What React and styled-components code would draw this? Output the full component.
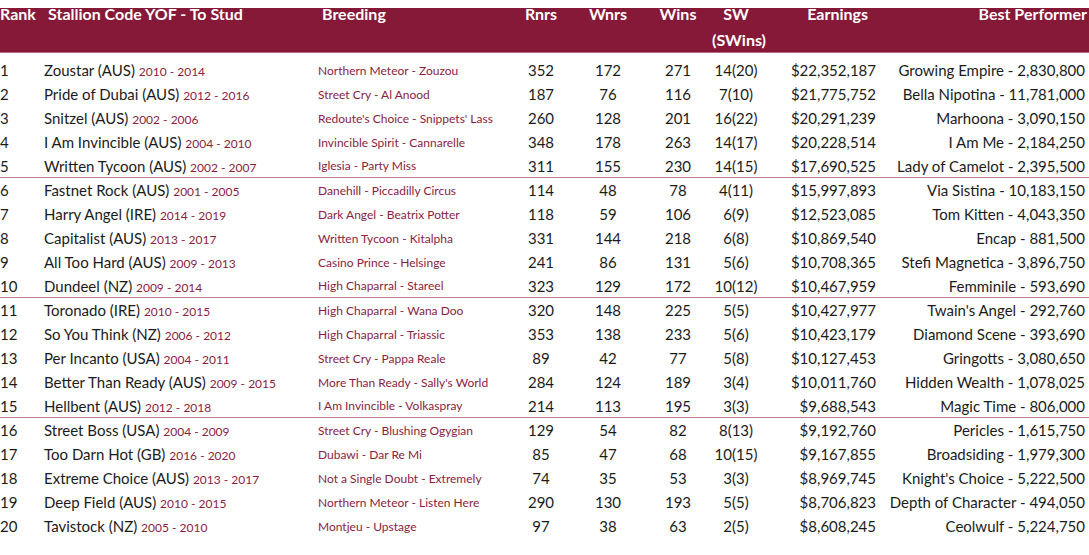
import React from "react";
import styled, { createGlobalStyle } from "styled-components";

const GlobalStyle = createGlobalStyle`
  body {
    margin: 0;
    background: #fff;
    font-family: Lato, "Liberation Sans", sans-serif;
  }
`;

const rows = [
  ["1", "Zoustar (AUS)", "2010 - 2014", "Northern Meteor - Zouzou", "352", "172", "271", "14(20)", "$22,352,187", "Growing Empire - 2,830,800"],
  ["2", "Pride of Dubai (AUS)", "2012 - 2016", "Street Cry - Al Anood", "187", "76", "116", "7(10)", "$21,775,752", "Bella Nipotina - 11,781,000"],
  ["3", "Snitzel (AUS)", "2002 - 2006", "Redoute's Choice - Snippets' Lass", "260", "128", "201", "16(22)", "$20,291,239", "Marhoona - 3,090,150"],
  ["4", "I Am Invincible (AUS)", "2004 - 2010", "Invincible Spirit - Cannarelle", "348", "178", "263", "14(17)", "$20,228,514", "I Am Me - 2,184,250"],
  ["5", "Written Tycoon (AUS)", "2002 - 2007", "Iglesia - Party Miss", "311", "155", "230", "14(15)", "$17,690,525", "Lady of Camelot - 2,395,500"],
  ["6", "Fastnet Rock (AUS)", "2001 - 2005", "Danehill - Piccadilly Circus", "114", "48", "78", "4(11)", "$15,997,893", "Via Sistina - 10,183,150"],
  ["7", "Harry Angel (IRE)", "2014 - 2019", "Dark Angel - Beatrix Potter", "118", "59", "106", "6(9)", "$12,523,085", "Tom Kitten - 4,043,350"],
  ["8", "Capitalist (AUS)", "2013 - 2017", "Written Tycoon - Kitalpha", "331", "144", "218", "6(8)", "$10,869,540", "Encap - 881,500"],
  ["9", "All Too Hard (AUS)", "2009 - 2013", "Casino Prince - Helsinge", "241", "86", "131", "5(6)", "$10,708,365", "Stefi Magnetica - 3,896,750"],
  ["10", "Dundeel (NZ)", "2009 - 2014", "High Chaparral - Stareel", "323", "129", "172", "10(12)", "$10,467,959", "Femminile - 593,690"],
  ["11", "Toronado (IRE)", "2010 - 2015", "High Chaparral - Wana Doo", "320", "148", "225", "5(5)", "$10,427,977", "Twain's Angel - 292,760"],
  ["12", "So You Think (NZ)", "2006 - 2012", "High Chaparral - Triassic", "353", "138", "233", "5(6)", "$10,423,179", "Diamond Scene - 393,690"],
  ["13", "Per Incanto (USA)", "2004 - 2011", "Street Cry - Pappa Reale", "89", "42", "77", "5(8)", "$10,127,453", "Gringotts - 3,080,650"],
  ["14", "Better Than Ready (AUS)", "2009 - 2015", "More Than Ready - Sally's World", "284", "124", "189", "3(4)", "$10,011,760", "Hidden Wealth - 1,078,025"],
  ["15", "Hellbent (AUS)", "2012 - 2018", "I Am Invincible - Volkaspray", "214", "113", "195", "3(3)", "$9,688,543", "Magic Time - 806,000"],
  ["16", "Street Boss (USA)", "2004 - 2009", "Street Cry - Blushing Ogygian", "129", "54", "82", "8(13)", "$9,192,760", "Pericles - 1,615,750"],
  ["17", "Too Darn Hot (GB)", "2016 - 2020", "Dubawi - Dar Re Mi", "85", "47", "68", "10(15)", "$9,167,855", "Broadsiding - 1,979,300"],
  ["18", "Extreme Choice (AUS)", "2013 - 2017", "Not a Single Doubt - Extremely", "74", "35", "53", "3(3)", "$8,969,745", "Knight's Choice - 5,222,500"],
  ["19", "Deep Field (AUS)", "2010 - 2015", "Northern Meteor - Listen Here", "290", "130", "193", "5(5)", "$8,706,823", "Depth of Character - 494,050"],
  ["20", "Tavistock (NZ)", "2005 - 2010", "Montjeu - Upstage", "97", "38", "63", "2(5)", "$8,608,245", "Ceolwulf - 5,224,750"],
];

// column template shared by header and rows
const COLS = "44px 274px 192px 62px 72px 68px 48px 116px 1fr";

const Table = styled.div`
  width: 1089px;
  padding-top: 8px;
`;

const Head = styled.div`
  display: grid;
  grid-template-columns: ${COLS};
  height: 45px;
  background: #861838;
  border-bottom: 1px solid #b76a82;
  box-sizing: border-box;
`;

const HeadCell = styled.div`
  color: #fff;
  font-weight: 700;
  font-size: 16px;
  line-height: 12px;
  text-align: ${(p) => p.align || "left"};
  padding-left: ${(p) => p.pl || 0}px;
  padding-right: ${(p) => p.pr || 0}px;
  white-space: nowrap;
`;

const SubHead = styled.span`
  display: block;
  margin-top: 14px;
`;

const Body = styled.div`
  padding-top: 5px;
`;

const Row = styled.div`
  display: grid;
  grid-template-columns: ${COLS};
  height: 24px;
  align-items: center;
  box-sizing: border-box;
  border-bottom: ${(p) => (p.sep ? "1.5px solid #c07a8f" : "none")};
  color: #1b1b1b;
  font-size: 15px;
`;

const Cell = styled.div`
  text-align: ${(p) => p.align || "left"};
  padding-right: ${(p) => p.pr || 0}px;
  white-space: nowrap;
`;

const Years = styled.span`
  color: #8a1d40;
  font-size: 12px;
`;

const Breeding = styled.div`
  color: #8a1d40;
  font-size: 12px;
  white-space: nowrap;
`;

export default function App() {
  return (
    <Table>
      <GlobalStyle />
      <Head>
        <HeadCell>Rank</HeadCell>
        <HeadCell pl={4}>Stallion Code YOF - To Stud</HeadCell>
        <HeadCell pl={4}>Breeding</HeadCell>
        <HeadCell align="center">Rnrs</HeadCell>
        <HeadCell align="center">Wnrs</HeadCell>
        <HeadCell align="center">Wins</HeadCell>
        <HeadCell align="center">
          SW
          <SubHead>(SWins)</SubHead>
        </HeadCell>
        <HeadCell align="right" pr={8}>Earnings</HeadCell>
        <HeadCell align="right" pr={2}>Best Performer</HeadCell>
      </Head>
      <Body>
        {rows.map((r, i) => (
          <Row key={r[0]} sep={i === 4 || i === 9 || i === 14}>
            <Cell>{r[0]}</Cell>
            <Cell>
              {r[1]} <Years>{r[2]}</Years>
            </Cell>
            <Breeding>{r[3]}</Breeding>
            <Cell align="center">{r[4]}</Cell>
            <Cell align="center">{r[5]}</Cell>
            <Cell align="center">{r[6]}</Cell>
            <Cell align="center">{r[7]}</Cell>
            <Cell align="right">{r[8]}</Cell>
            <Cell align="right" pr={4}>{r[9]}</Cell>
          </Row>
        ))}
      </Body>
    </Table>
  );
}
